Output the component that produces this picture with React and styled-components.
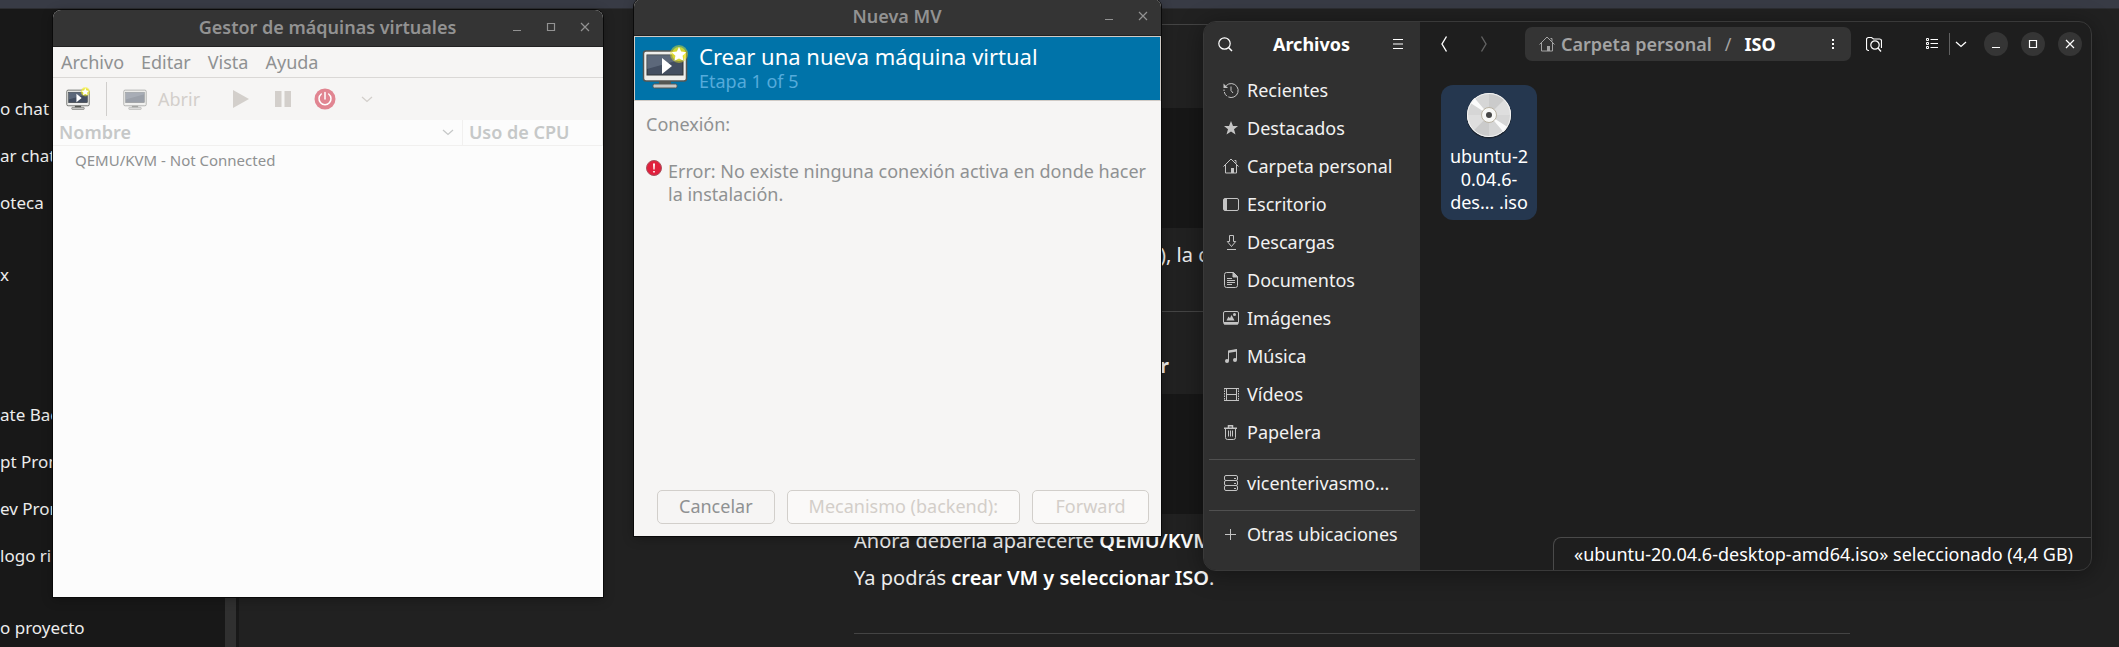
import React from 'react';
import styled, { createGlobalStyle } from 'styled-components';

const GlobalStyle = createGlobalStyle`
  *, *::before, *::after { box-sizing: border-box; }
  body { margin: 0; background: #212121; font-family: "Noto Sans", "Open Sans", sans-serif; font-size: 18px; line-height: 23px; overflow: hidden; }
  button { font: inherit; color: inherit; background: none; border: 0; padding: 0; margin: 0; cursor: pointer; }
  ul { list-style: none; margin: 0; padding: 0; }
  h1, h2, p { margin: 0; font-size: inherit; font-weight: inherit; }
  svg { display: block; flex: none; }
`;

/* ---------- desktop ---------- */

const Desktop = styled.div`
  display: grid;
  grid-template: 100vh / 100%;
  > * { grid-area: 1 / 1; min-width: 0; }
`;

const ChatPage = styled.div`
  display: flex;
  flex-direction: column;
  overflow: hidden;
  color: #ececec;
`;

const TopStrip = styled.div`
  flex: none;
  height: 9px;
  background: #383b45;
  border-bottom: 1px solid #2c2d31;
`;

const ChatBody = styled.div`
  flex: 1;
  display: flex;
  min-height: 0;
`;

const ChatNav = styled.nav`
  flex: none;
  width: 239px;
  padding-top: 76px;
  background: #181818;
  border-right: 3px solid #181818;
  box-shadow: inset -11px 0 #303030;
  font-size: 17px;
`;

const ChatList = styled.ul`
  margin-bottom: ${(p) => p.$after}px;
`;

const ChatLink = styled.a`
  display: block;
  height: 47px;
  line-height: 47px;
  color: #ececec;
  text-decoration: none;
  white-space: nowrap;
`;

const ChatMain = styled.main`
  flex: 1;
  display: grid;
  grid-template-columns: 615fr 996fr 269fr;
`;

const Answer = styled.article`
  grid-column: 2;
  min-width: 0;
  padding-top: 15px;
  font-size: 20px;
  line-height: 24px;
  white-space: nowrap;
`;

const Rule = styled.hr`
  height: 1px;
  margin: 0;
  border: 0;
  background: #444444;
`;

const CodeBlock = styled.div`
  height: 120px;
  margin-top: ${(p) => p.$before}px;
  background: #171717;
`;

const AnswerTail = styled.p`
  padding: 15px 0 44px 306px;
`;

const AnswerHeading = styled.h2`
  padding-top: 42px;
  padding-left: 306px;
  font-weight: 700;
`;

const Paragraph = styled.p`
  margin-top: ${(p) => p.$before}px;
  & + hr { margin-top: 43px; }
  b { font-weight: 600; color: #ffffff; }
`;

/* ---------- windows ---------- */

const WindowLayer = styled.div`
  display: grid;
  grid-template-columns: 53fr 550fr 31fr 527fr 42fr 889fr 27fr;
  grid-template-rows: 100%;
  position: relative;
`;

const GtkWindow = styled.section`
  grid-column: ${(p) => p.$column};
  margin: ${(p) => p.$top}px 0 ${(p) => p.$bottom}px;
  display: flex;
  flex-direction: column;
  overflow: hidden;
  min-width: 0;
  border-radius: 8px 8px 0 0;
  background: ${(p) => p.$background};
  color: #8f9192;
  box-shadow: 0 0 0 1px #0a0a0a, 0 2px 12px rgba(0, 0, 0, 0.3);
`;

const TitleBar = styled.header`
  flex: none;
  display: grid;
  grid-template-columns: 1fr auto 1fr;
  align-items: center;
  height: 37px;
  padding: 0 1px 2px 0;
  background: #343434;
  border-bottom: 1px solid #222222;
  color: #929292;
`;

const WindowTitle = styled.h1`
  grid-column: 2;
  font-weight: 600;
`;

const TitleControls = styled.div`
  display: flex;
  justify-content: flex-end;
`;

const TitleButton = styled.button`
  display: grid;
  place-items: center;
  width: 34px;
  height: 34px;
`;

const MenuBar = styled.nav`
  flex: none;
  display: flex;
  gap: 1px;
  height: 31px;
  background: #f6f5f4;
  border-bottom: 1px solid #dad8d6;
`;

const MenuItem = styled.button`
  padding: 0 8px;
`;

const ToolBar = styled.div`
  flex: none;
  display: flex;
  align-items: center;
  height: 42px;
  padding-left: 4px;
  background: #f6f5f4;
`;

const ToolButton = styled.button`
  display: flex;
  align-items: center;
  justify-content: center;
  gap: 11px;
  min-width: 42px;
  height: 34px;
  color: #d3cfcb;
  padding: 0 8px;
`;

const ToolDivider = styled.div`
  width: 1px;
  height: 34px;
  margin: 0 8px 0 7px;
  background: #d0cecc;
`;

const ToolGroup = styled.div`
  display: flex;
  margin-left: 12px;
`;

const MachineTable = styled.table`
  width: 100%;
  table-layout: fixed;
  border-collapse: collapse;
  text-align: left;
`;

const HeadCell = styled.th`
  width: ${(p) => p.$width};
  height: 25px;
  padding: 0 8px 0 6px;
  border-bottom: 1px solid #f1f0ef;
  border-right: 1px solid #f1f0ef;
  color: #c6c8c8;
  font-weight: 600;
`;

const HeadLabel = styled.div`
  display: flex;
  align-items: center;
  justify-content: space-between;
  height: 23px;
`;

const MachineCell = styled.td`
  height: 30px;
  padding: 0 0 0 22px;
  font-size: 15px;
`;

/* ---------- dialog ---------- */

const Banner = styled.div`
  flex: none;
  display: flex;
  align-items: center;
  gap: 11px;
  height: 65px;
  padding: 0 7px 2px;
  background: #0073a9;
  border: 1px solid #d0cbc6;
`;

const BannerTitle = styled.h2`
  color: #ffffff;
  font-size: 22px;
  line-height: 28px;
`;

const BannerStep = styled.p`
  color: #55abdb;
`;

const DialogBody = styled.div`
  flex: 1;
  display: flex;
  flex-direction: column;
  gap: 24px;
  padding: 12px 12px 0;
`;

const ErrorLine = styled.div`
  display: flex;
  gap: 6px;
`;

const DialogActions = styled.footer`
  display: flex;
  justify-content: flex-end;
  gap: 12px;
  padding: 0 12px 12px;
`;

const DialogButton = styled.button`
  min-width: 117px;
  height: 34px;
  padding: 0 21px 2px;
  border: 1px solid #d2cfcb;
  border-radius: 5px;
  color: #8f9192;
  background: #f6f5f4;
  &:disabled { color: #d3cec9; background: #faf9f8; cursor: default; }
`;

/* ---------- files ---------- */

const FilesWindow = styled.section`
  grid-column: 6;
  margin: 21px 0 76px;
  display: grid;
  grid-template-columns: 216px 1fr;
  overflow: hidden;
  border: 1px solid #393939;
  border-radius: 13px;
  background: #1e1e1e;
  color: #ffffff;
  box-shadow: 0 3px 24px rgba(0, 0, 0, 0.4);
`;

const Places = styled.aside`
  background: #303030;
`;

const PlacesHeader = styled.header`
  display: flex;
  align-items: center;
  justify-content: space-between;
  height: 46px;
  padding: 0 5px 2px 4px;
  margin-bottom: 4px;
  font-weight: 700;
`;

const IconButton = styled.button`
  flex: none;
  display: grid;
  place-items: center;
  width: ${(p) => p.$width || 34}px;
  height: 34px;
  opacity: ${(p) => (p.disabled ? 0.3 : 1)};
`;

const PlaceLink = styled.a`
  display: flex;
  align-items: center;
  gap: 8px;
  height: 38px;
  padding: 0 0 2px 19px;
  color: #f2f2f2;
  text-decoration: none;
  white-space: nowrap;
  svg { color: #c4c4c4; }
`;

const PlaceRule = styled.hr`
  height: 1px;
  margin: 7px 5px 5px;
  border: 0;
  background: #505050;
`;

const Browser = styled.div`
  display: flex;
  flex-direction: column;
  min-width: 0;
`;

const HeaderBar = styled.header`
  display: flex;
  align-items: center;
  height: 46px;
  padding: 0 9px 2px 7px;
`;

const History = styled.div`
  display: flex;
  gap: 6px;
  margin-right: 24px;
`;

const PathBar = styled.nav`
  flex: 1;
  display: flex;
  align-items: center;
  height: 34px;
  margin-right: 6px;
  padding: 0 10px 0 14px;
  border-radius: 7px;
  background: #343434;
  color: #a3a3a3;
  font-weight: 600;
  white-space: nowrap;
`;

const Crumb = styled.a`
  display: flex;
  align-items: center;
  gap: 6px;
  color: ${(p) => (p['aria-current'] ? '#ffffff' : '#a3a3a3')};
  font-weight: ${(p) => (p['aria-current'] ? 700 : 600)};
  text-decoration: none;
`;

const Slash = styled.span`
  margin: 0 13px;
  font-weight: 400;
`;

const PathMenu = styled.button`
  display: grid;
  place-items: center;
  width: 16px;
  height: 34px;
  margin-left: auto;
  color: #ffffff;
`;

const ViewSwitch = styled.div`
  display: flex;
  align-items: center;
  margin: 0 12px 0 24px;
`;

const ViewDivider = styled.div`
  width: 1px;
  height: 22px;
  background: #606060;
`;

const WindowControls = styled.div`
  display: flex;
  gap: 13px;
`;

const RoundButton = styled.button`
  display: grid;
  place-items: center;
  width: 24px;
  height: 24px;
  border-radius: 50%;
  background: #353535;
`;

const FileArea = styled.div`
  flex: 1;
  padding: 17px 21px;
`;

const FileTile = styled.button`
  display: flex;
  flex-direction: column;
  align-items: center;
  gap: 6px;
  width: 96px;
  padding: 6px 4px;
  border-radius: 12px;
  background: #25374f;
  text-align: center;
  white-space: nowrap;
`;

const StatusBar = styled.footer`
  align-self: flex-end;
  height: 33px;
  padding: 5px 18px 0 20px;
  border: solid #4a4a4a;
  border-width: 1px 0 0 1px;
  border-top-left-radius: 8px;
  white-space: nowrap;
`;

/* ---------- drawings ---------- */

const Line = ({ size = 16, children, width = 1 }) => (
  <svg width={size} height={size} viewBox={`0 0 ${size} ${size}`} fill="none" stroke="currentColor" strokeWidth={width} aria-hidden="true">
    {children}
  </svg>
);

const MinimizeGlyph = () => <Line size={10}><path d="M1 8.5h8" /></Line>;
const MaximizeGlyph = () => <Line size={10}><path d="M1.5 1.5h7v7h-7z" strokeWidth="1.2" /></Line>;
const CloseGlyph = () => <Line size={10}><path d="M1 1l8 8M9 1l-8 8" strokeWidth="1.2" /></Line>;
const ChevronDown = () => <Line size={12}><path d="M1 4l5 4.500 5-4.500" strokeWidth="1.300" /></Line>;

const placeIcons = {
  recent: (
    <Line>
      <path d="M3.200 3.600A7 7 0 1 1 1.300 10" strokeDasharray="30 1.500" />
      <path d="M8 4.500v4l2 2.500" />
      <path d="M.5 1.500v4.500h4.500z" fill="currentColor" stroke="none" />
      <path d="M1 7.500v1.500" />
    </Line>
  ),
  star: (
    <Line><path d="M8 1l2 5h5l-4 3.300 1.500 5.200L8 11.400l-4.500 3.100L5 9.300 1 6h5z" fill="currentColor" stroke="none" /></Line>
  ),
  home: (
    <Line>
      <path d="M.5 8.500L8 1l7.500 7.500M2.500 7v8h11V7M11.500 2.500h1.500v3" />
      <path d="M8 10h3v5H8z" fill="currentColor" stroke="none" />
    </Line>
  ),
  desktop: (
    <Line>
      <rect x="0.500" y="2.500" width="15" height="12" rx="1.500" />
      <path d="M1 3h3v11H1z" fill="currentColor" stroke="none" />
    </Line>
  ),
  download: (
    <Line><path d="M6.500 1.500h4v6h2.200L8.500 12.500 4.300 7.500h2.200zM4 15.500h9" /></Line>
  ),
  document: (
    <Line>
      <path d="M3.500.5h7l4 4v9a2 2 0 0 1-2 2h-9a2 2 0 0 1-2-2v-11a2 2 0 0 1 2-2z" />
      <path d="M10 .5v4.500h4.500z" fill="currentColor" />
      <path d="M4 6.500h5M4 8.500h8M4 10.500h8M4 12.500h5" />
    </Line>
  ),
  image: (
    <Line>
      <rect x="0.500" y="1.500" width="15" height="12.500" rx="1.500" />
      <path d="M1 12h14v2.500H1z" fill="currentColor" stroke="none" />
      <path d="M3.500 10.500l2-4 1.500 1.700L8.500 5l3 5.500z" fill="currentColor" stroke="none" />
      <circle cx="11.500" cy="4.500" r="1.500" fill="currentColor" stroke="none" />
    </Line>
  ),
  music: (
    <Line>
      <path d="M5.500 13V3.500l8-1.500v10" />
      <path d="M5 2.500l9-1.500v2.500L5 5z" fill="currentColor" stroke="none" />
      <circle cx="4" cy="13" r="2" fill="currentColor" stroke="none" />
      <circle cx="12" cy="12" r="2" fill="currentColor" stroke="none" />
    </Line>
  ),
  video: (
    <Line>
      <path d="M3.500 2v13M13.500 2v13M3.500 2.500h10M3.500 8.500h10M3.500 14.500h10" />
      <path d="M1.500 2v13M15.500 2v13" strokeDasharray="1.500 1" />
      <path d="M1 2.500h2M1 14.500h2M14 2.500h2M14 14.500h2" />
    </Line>
  ),
  trash: (
    <Line>
      <path d="M2.500 5v8.500a2 2 0 0 0 2 2h6a2 2 0 0 0 2-2V5M5.500 6.500v6M7.500 6.500v6M9.500 6.500v6" />
      <path d="M1 4.200h13M5.500 3.500v-1.800h4v1.800" strokeWidth="1.500" />
    </Line>
  ),
  server: (
    <Line>
      <rect x="1.500" y="0.500" width="13" height="5" rx="1.500" />
      <rect x="1.500" y="5.500" width="13" height="5" rx="1.500" />
      <rect x="1.500" y="10.500" width="13" height="5" rx="1.500" />
      <path d="M11 3.500h2M11 8.500h2M11 13.500h2" />
    </Line>
  ),
  plus: <Line><path d="M2 8.500h11M7.500 3v11" /></Line>,
};

const SearchGlyph = () => (
  <Line><circle cx="7.500" cy="7.500" r="5.700" strokeWidth="1.200" /><path d="M11.500 11.500l3.500 3.500" strokeWidth="1.500" /></Line>
);
const MenuGlyph = () => <Line><path d="M3 3.500h10M3 8h10M3 12.500h10" strokeWidth="1.200" /></Line>;
const BackGlyph = () => <Line size={18}><path d="M11.500 1.500L7 9l4.500 7.500" strokeWidth="1.400" /></Line>;
const ForwardGlyph = () => <Line size={18}><path d="M6.500 1.500L11 9l-4.500 7.500" strokeWidth="1.400" /></Line>;
const DotsGlyph = () => (
  <Line><path d="M7 3h2v2H7zM7 7h2v2H7zM7 11h2v2H7z" fill="currentColor" stroke="none" /></Line>
);
const FolderSearchGlyph = () => (
  <Line>
    <path d="M3 14.500h-.5a2 2 0 0 1-2-2v-9a2 2 0 0 1 2-2h3l2 1.500h6a2 2 0 0 1 2 2v7" strokeWidth="1.200" />
    <circle cx="9" cy="9" r="4.200" strokeWidth="1.200" />
    <path d="M12 12l3 3.500" strokeWidth="1.300" />
  </Line>
);
const ListGlyph = () => (
  <Line>
    <path d="M2.500 2.500h2v2h-2zM2.500 6.500h2v2h-2zM2.500 10.500h2v2h-2z" />
    <path d="M6.500 3.500H14M6.500 7.500H14M6.500 11.500H14" strokeWidth="1.200" />
  </Line>
);

const Monitor = ({ faded }) => (
  <g opacity={faded ? 0.5 : 1}>
    <path d="M17 35h12v5H17z" fill="#555753" />
    <rect x="11" y="39" width="24" height="4" rx="1.500" fill="#c8c8c6" stroke="#555753" />
    <rect x="1.500" y="6" width="43" height="30" rx="2.500" fill="#eeeeec" stroke="#555753" strokeWidth="1.500" />
    <rect x="5" y="10" width="36" height="20" fill="#434e60" stroke="#2e3436" />
    <path d="M5 10h36v4L5 24z" fill="#8390a3" opacity="0.400" />
  </g>
);

const Sparkle = () => (
  <>
    <circle cx="37" cy="9" r="9" fill="#f1ec22" opacity="0.450" />
    <circle cx="37" cy="9" r="7" fill="#f1ec22" opacity="0.700" />
    <path d="M37 2l2.200 4.600 5 .7-3.600 3.500.9 5L37 13.400l-4.500 2.400.9-5-3.600-3.500 5-.7z" fill="#ffffff" />
  </>
);

const NewMachineIcon = ({ size }) => (
  <svg width={size} height={size} viewBox="0 0 46 46" aria-hidden="true">
    <Monitor />
    <path d="M20 13v16l10-8z" fill="#ffffff" />
    <Sparkle />
  </svg>
);

const OpenIcon = () => (
  <svg width="24" height="24" viewBox="0 0 46 46" aria-hidden="true"><Monitor faded /></svg>
);

const PlayIcon = () => (
  <svg width="20" height="20" viewBox="0 0 20 20" aria-hidden="true"><path d="M2 1v18l16-9z" fill="currentColor" /></svg>
);

const PauseIcon = () => (
  <svg width="20" height="20" viewBox="0 0 20 20" aria-hidden="true"><path d="M2 2h6.500v16H2zM11.500 2H18v16h-6.500z" fill="currentColor" /></svg>
);

const PowerIcon = () => (
  <svg width="22" height="22" viewBox="0 0 22 22" fill="none" aria-hidden="true">
    <circle cx="11" cy="11" r="10.500" fill="#e18591" />
    <path d="M7.300 6a6 6 0 1 0 7.400 0M11 4.500V11" stroke="#ffffff" strokeWidth="1.500" strokeLinecap="round" />
  </svg>
);

const ErrorIcon = () => (
  <svg width="16" height="16" viewBox="0 0 16 16" aria-hidden="true">
    <circle cx="8" cy="8" r="7.500" fill="#e0203d" stroke="#a85560" />
    <path d="M7 3.500h2l-.4 6H7.400zM7.200 11h1.600v1.600H7.200z" fill="#ffffff" />
  </svg>
);

const DiscIcon = () => (
  <svg width="48" height="48" viewBox="0 0 48 48" aria-hidden="true">
    <circle cx="24" cy="25" r="22.500" fill="#111111" opacity="0.500" />
    <circle cx="24" cy="24" r="22" fill="#d6d6d6" />
    <path d="M24 24V2a22 22 0 0 1 15.500 6.500zM24 24V46a22 22 0 0 1-15.500-6.500z" fill="#cbcbcb" />
    <path d="M24 24L39.500 8.500A22 22 0 0 1 46 24zM24 24L8.500 39.500A22 22 0 0 1 2 24z" fill="#dedede" />
    <path d="M24 24L5.500 12a22 22 0 0 1 4-5zM24 24l18.500 12a22 22 0 0 1-4 5z" fill="#fbfbfb" />
    <circle cx="24" cy="24" r="21.500" fill="none" stroke="#f4f4f4" />
    <circle cx="24" cy="24" r="7.500" fill="#f8f8f6" stroke="#b9b2a2" />
    <circle cx="24" cy="24" r="3" fill="#474747" />
  </svg>
);

/* ---------- content ---------- */

const chatGroups = [
  { after: 25, items: ['o chat', 'ar chats', 'oteca'] },
  { after: 93, items: ['x'] },
  { after: 25, items: ['ate Back', 'pt Prom', 'ev Prom', 'logo ri'] },
  { after: 0, items: ['o proyecto'] },
];

const placeGroups = [
  [
    ['recent', 'Recientes'],
    ['star', 'Destacados'],
    ['home', 'Carpeta personal'],
    ['desktop', 'Escritorio'],
    ['download', 'Descargas'],
    ['document', 'Documentos'],
    ['image', 'Imágenes'],
    ['music', 'Música'],
    ['video', 'Vídeos'],
    ['trash', 'Papelera'],
  ],
  [['server', 'vicenterivasmo…']],
  [['plus', 'Otras ubicaciones']],
];

function Chat() {
  return (
    <ChatPage>
      <TopStrip />
      <ChatBody>
        <ChatNav>
          {chatGroups.map((group) => (
            <ChatList key={group.items[0]} $after={group.after}>
              {group.items.map((item) => (
                <li key={item}><ChatLink href="#chat">{item}</ChatLink></li>
              ))}
            </ChatList>
          ))}
        </ChatNav>
        <ChatMain>
          <Answer>
            <Rule />
            <CodeBlock $before={83} />
            <AnswerTail>), la c</AnswerTail>
            <Rule />
            <AnswerHeading>r</AnswerHeading>
            <CodeBlock $before={16} />
            <Paragraph $before={15}>Ahora debería aparecerte <b>QEMU/KVM</b></Paragraph>
            <Paragraph $before={13}>Ya podrás <b>crear VM y seleccionar ISO</b>.</Paragraph>
            <Rule />
          </Answer>
        </ChatMain>
      </ChatBody>
    </ChatPage>
  );
}

function ManagerWindow() {
  return (
    <GtkWindow $column={2} $top={10} $bottom={50} $background="#fcfcfc">
      <TitleBar>
        <WindowTitle>Gestor de máquinas virtuales</WindowTitle>
        <TitleControls>
          <TitleButton aria-label="Minimizar"><MinimizeGlyph /></TitleButton>
          <TitleButton aria-label="Maximizar"><MaximizeGlyph /></TitleButton>
          <TitleButton aria-label="Cerrar"><CloseGlyph /></TitleButton>
        </TitleControls>
      </TitleBar>
      <MenuBar>
        {['Archivo', 'Editar', 'Vista', 'Ayuda'].map((name) => <MenuItem key={name}>{name}</MenuItem>)}
      </MenuBar>
      <ToolBar>
        <ToolButton aria-label="Crear máquina virtual"><NewMachineIcon size={24} /></ToolButton>
        <ToolDivider />
        <ToolButton><OpenIcon />Abrir</ToolButton>
        <ToolGroup>
          <ToolButton aria-label="Iniciar"><PlayIcon /></ToolButton>
          <ToolButton aria-label="Pausar"><PauseIcon /></ToolButton>
          <ToolButton aria-label="Apagar"><PowerIcon /></ToolButton>
          <ToolButton aria-label="Opciones de apagado"><ChevronDown /></ToolButton>
        </ToolGroup>
      </ToolBar>
      <MachineTable>
        <thead>
          <tr>
            <HeadCell $width="74.500%"><HeadLabel>Nombre<ChevronDown /></HeadLabel></HeadCell>
            <HeadCell $width="auto"><HeadLabel>Uso de CPU</HeadLabel></HeadCell>
          </tr>
        </thead>
        <tbody>
          <tr>
            <MachineCell>QEMU/KVM - Not Connected</MachineCell>
            <MachineCell />
          </tr>
        </tbody>
      </MachineTable>
    </GtkWindow>
  );
}

function NewMachineWindow() {
  return (
    <GtkWindow $column={4} $top={-1} $bottom={111} $background="#f6f5f4">
      <TitleBar>
        <WindowTitle>Nueva MV</WindowTitle>
        <TitleControls>
          <TitleButton aria-label="Minimizar"><MinimizeGlyph /></TitleButton>
          <TitleButton aria-label="Cerrar"><CloseGlyph /></TitleButton>
        </TitleControls>
      </TitleBar>
      <Banner>
        <NewMachineIcon size={46} />
        <div>
          <BannerTitle>Crear una nueva máquina virtual</BannerTitle>
          <BannerStep>Etapa 1 of 5</BannerStep>
        </div>
      </Banner>
      <DialogBody>
        <p>Conexión:</p>
        <ErrorLine role="alert">
          <ErrorIcon />
          <p>Error: No existe ninguna conexión activa en donde hacer la instalación.</p>
        </ErrorLine>
      </DialogBody>
      <DialogActions>
        <DialogButton>Cancelar</DialogButton>
        <DialogButton disabled>Mecanismo (backend):</DialogButton>
        <DialogButton disabled>Forward</DialogButton>
      </DialogActions>
    </GtkWindow>
  );
}

function Files() {
  return (
    <FilesWindow>
      <Places>
        <PlacesHeader>
          <IconButton aria-label="Buscar"><SearchGlyph /></IconButton>
          <h1>Archivos</h1>
          <IconButton aria-label="Menú principal"><MenuGlyph /></IconButton>
        </PlacesHeader>
        {placeGroups.map((group, index) => (
          <React.Fragment key={group[0][0]}>
            {index > 0 && <PlaceRule />}
            <ul>
              {group.map(([icon, label]) => (
                <li key={icon}><PlaceLink href="#place">{placeIcons[icon]}{label}</PlaceLink></li>
              ))}
            </ul>
          </React.Fragment>
        ))}
      </Places>
      <Browser>
        <HeaderBar>
          <History>
            <IconButton aria-label="Atrás"><BackGlyph /></IconButton>
            <IconButton aria-label="Adelante" disabled><ForwardGlyph /></IconButton>
          </History>
          <PathBar>
            <Crumb href="#home">{placeIcons.home}Carpeta personal</Crumb>
            <Slash>/</Slash>
            <Crumb href="#iso" aria-current="page">ISO</Crumb>
            <PathMenu aria-label="Menú de la carpeta"><DotsGlyph /></PathMenu>
          </PathBar>
          <IconButton aria-label="Buscar en la carpeta"><FolderSearchGlyph /></IconButton>
          <ViewSwitch>
            <IconButton aria-label="Vista de lista"><ListGlyph /></IconButton>
            <ViewDivider />
            <IconButton aria-label="Opciones de vista" $width={22}><ChevronDown /></IconButton>
          </ViewSwitch>
          <WindowControls>
            <RoundButton aria-label="Minimizar"><MinimizeGlyph /></RoundButton>
            <RoundButton aria-label="Maximizar"><MaximizeGlyph /></RoundButton>
            <RoundButton aria-label="Cerrar"><CloseGlyph /></RoundButton>
          </WindowControls>
        </HeaderBar>
        <FileArea>
          <FileTile>
            <DiscIcon />
            <span>ubuntu-2<br />0.04.6-<br />des… .iso</span>
          </FileTile>
        </FileArea>
        <StatusBar>«ubuntu-20.04.6-desktop-amd64.iso» seleccionado (4,4 GB)</StatusBar>
      </Browser>
    </FilesWindow>
  );
}

export default function App() {
  return (
    <>
      <GlobalStyle />
      <Desktop>
        <Chat />
        <WindowLayer>
          <ManagerWindow />
          <NewMachineWindow />
          <Files />
        </WindowLayer>
      </Desktop>
    </>
  );
}
